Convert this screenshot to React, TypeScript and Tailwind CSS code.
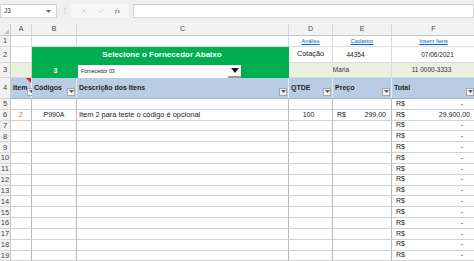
import { X, Check } from 'lucide-react';

const font = "font-['Liberation_Sans',Arial,sans-serif]";

function Filter() {
  return (
    <div className="flex h-[8px] w-[8px] shrink-0 items-end justify-center border border-[#a6a6a6] bg-[#f3f3f3]">
      <svg width="5" height="4" viewBox="0 0 5 4" className="mb-[1px]">
        <path d="M0 0h5L2.5 3z" fill="#555" />
      </svg>
    </div>
  );
}

function HeaderCell({ label, first }: { label: string; first?: boolean }) {
  return (
    <div className="relative flex items-center justify-between border-r border-b border-r-[#e4ebf5] border-b-[#9fb3cf] bg-[#b8cce4] pl-[2px] pr-[1px]">
      <span className="text-[7px] font-bold text-[#1f1f1f] whitespace-nowrap">{label}</span>
      <div className="self-end pb-[2px]">
        <Filter />
      </div>
      {first && (
        <svg width="5" height="5" viewBox="0 0 5 5" className="absolute right-0 top-0">
          <path d="M0 0h5v5z" fill="#e02020" />
        </svg>
      )}
    </div>
  );
}

const cell = 'border-r border-b border-r-[#bdbdbd] border-b-[#d2d2d2] bg-white';
const rowHead =
  'flex items-center justify-center overflow-hidden border-r border-b border-r-[#c6c6c6] border-b-[#d6d6d6] bg-[#f2f2f2] text-[7.5px] text-[#444]';

export default function App() {
  const dataRows = Array.from({ length: 15 }, (_, i) => i + 5);

  return (
    <div className={`h-[261px] w-[474px] overflow-hidden bg-white ${font}`}>
      {/* formula bar */}
      <div className="flex h-[24px] items-center gap-[4px] bg-[#efefef] pb-[2px]">
        <div className="flex h-[14px] w-[57px] items-center justify-between border border-[#d4d4d4] bg-white pl-[3px] pr-[5px]">
          <span className="text-[6.5px] text-[#333]">J3</span>
          <svg width="5" height="3" viewBox="0 0 5 3">
            <path d="M0 0h5L2.5 3z" fill="#666" />
          </svg>
        </div>
        <span className="w-[6px] text-center text-[7px] text-[#b0b0b0]">⋮</span>
        <div className="flex h-[14px] w-[58px] items-center justify-around bg-[#f7f7f7] px-[4px]">
          <X size={8} strokeWidth={1.3} color="#a8a8a8" />
          <Check size={8} strokeWidth={1.3} color="#a8a8a8" />
          <span className="font-['Liberation_Serif',serif] text-[7px] italic text-[#666]">fx</span>
        </div>
        <div className="h-[14px] flex-1 border border-[#d4d4d4] bg-white" />
      </div>

      {/* sheet */}
      <div className="grid grid-cols-[11px_21px_45px_212px_44px_59px_84px] grid-rows-[12px_11px_16px_15px_21px_repeat(15,10.83px)]">
        {/* column headers */}
        <div className="relative border-r border-b border-[#c6c6c6] bg-[#f2f2f2]">
          <svg width="5" height="5" viewBox="0 0 5 5" className="absolute bottom-[1px] right-[1px]">
            <path d="M5 0v5H0z" fill="#c2c2c2" />
          </svg>
        </div>
        {['A', 'B', 'C', 'D', 'E', 'F'].map((c) => (
          <div
            key={c}
            className="flex items-center justify-center border-r border-b border-r-[#d8d8d8] border-b-[#c6c6c6] bg-[#f2f2f2] text-[7px] text-[#444]"
          >
            {c}
          </div>
        ))}

        {/* row 1 */}
        <div className={rowHead}>1</div>
        <div className={`${cell} border-r-[#dadada] border-b-[#dadada]`} />
        <div className={`${cell} border-r-[#dadada] border-b-[#dadada]`} />
        <div className={`${cell} border-r-[#dadada] border-b-[#dadada]`} />
        {['Análise', 'Cadastro', 'Inserir Itens'].map((t) => (
          <div key={t} className={`${cell} flex items-center justify-center border-r-[#dadada] border-b-[#dadada]`}>
            <span className="text-[5.5px] text-[#0563c1] underline">{t}</span>
          </div>
        ))}

        {/* row 2 */}
        <div className={rowHead}>2</div>
        <div className={`${cell} border-r-[#dadada] border-b-[#dadada]`} />
        <div className="col-span-2 flex items-center justify-center border-r border-r-[#00b050] bg-[#00b050] pl-[4px]">
          <span className="text-[8px] font-bold text-white">Selecione o Fornecedor Abaixo</span>
        </div>
        <div className={`${cell} flex items-center justify-center border-r-[#dadada] border-b-[#dadada] text-[7.3px] text-[#222]`}>Cotação</div>
        <div className={`${cell} flex items-center justify-center border-r-[#dadada] border-b-[#dadada] pr-[13px] text-[6.5px] text-[#222]`}>44354</div>
        <div className={`${cell} flex items-center justify-center border-r-[#dadada] border-b-[#dadada] pl-[8px] text-[6.5px] text-[#222]`}>07/06/2021</div>

        {/* row 3 */}
        <div className={rowHead}>3</div>
        <div className="border-r border-b border-r-[#d0d0d0] border-b-[#d6d6d6] bg-[#ebf1de]" />
        <div className="flex items-center justify-center bg-[#00b050] pl-[2px] pt-[2px] text-[7px] font-bold text-white">3</div>
        <div className="flex bg-[#00b050] pl-[1px] pt-[2px]">
          <div className="flex h-full w-[163px] items-center justify-between bg-white pl-[3px]">
            <span className="text-[5.2px] text-[#222]">Fornecedor 03</span>
            <div className="flex h-full w-[13px] items-center justify-center border-b-2 border-[#9a9a9a]">
              <svg width="8" height="5" viewBox="0 0 8 5">
                <path d="M0 0h8L4 5z" fill="#111" />
              </svg>
            </div>
          </div>
        </div>
        <div className="col-span-2 flex items-center justify-center border-r border-b border-r-[#dadada] border-b-[#d6d6d6] bg-[#ebf1de] pl-[2px] text-[6.5px] text-[#333]">
          Maria
        </div>
        <div className="flex items-center justify-center border-r border-b border-r-[#dadada] border-b-[#d6d6d6] bg-[#ebf1de] pr-[4px] text-[6.5px] text-[#333]">
          11 0000-3333
        </div>

        {/* row 4 headers */}
        <div className={rowHead}>4</div>
        <HeaderCell label="Item" first />
        <HeaderCell label="Códigos" />
        <HeaderCell label="Descrição dos Itens" />
        <HeaderCell label="QTDE" />
        <HeaderCell label="Preço" />
        <HeaderCell label="Total" />

        {/* data rows */}
        {dataRows.map((r) => {
          const filled = r === 6;
          return [
            <div key={`h${r}`} className={rowHead}>
              {r}
            </div>,
            <div key={`a${r}`} className={`${cell} flex items-center justify-center text-[7px] text-[#e46c0a]`}>
              {filled ? '2' : ''}
            </div>,
            <div key={`b${r}`} className={`${cell} flex items-center justify-center text-[7px] text-[#222]`}>
              {filled ? 'P990A' : ''}
            </div>,
            <div key={`c${r}`} className={`${cell} flex items-center pl-[2px] text-[7.4px] text-[#222] whitespace-nowrap`}>
              {filled ? 'Item 2 para teste o código é opcional' : ''}
            </div>,
            <div key={`d${r}`} className={`${cell} flex items-center justify-center pr-[4px] text-[7px] text-[#222]`}>
              {filled ? '100' : ''}
            </div>,
            <div key={`e${r}`} className={`${cell} flex items-center justify-between pl-[4px] pr-[5px] text-[7px] text-[#222]`}>
              {filled && (
                <>
                  <span>R$</span>
                  <span>299,00</span>
                </>
              )}
            </div>,
            <div key={`f${r}`} className={`${cell} flex items-center justify-between pl-[4px] text-[7px] text-[#222] ${filled ? 'pr-[5px]' : 'pr-[12px]'}`}>
              <span>R$</span>
              <span>{filled ? '29.900,00' : '-'}</span>
            </div>,
          ];
        })}
      </div>
    </div>
  );
}
